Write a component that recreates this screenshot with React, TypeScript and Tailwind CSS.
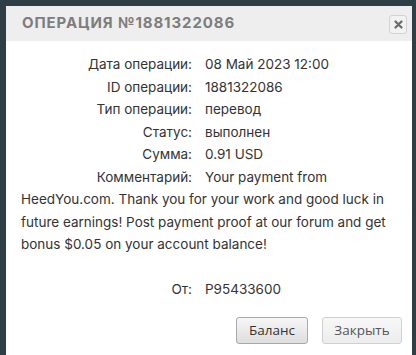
import React from "react";

const rows: [string, string][] = [
  ["Дата операции:", "08 Май 2023 12:00"],
  ["ID операции:", "1881322086"],
  ["Тип операции:", "перевод"],
  ["Статус:", "выполнен"],
  ["Сумма:", "0.91 USD"],
  ["Комментарий:", "Your payment from"],
];

export default function App() {
  return (
    <div className="w-[416px] h-[355px] bg-[#2f3d44] pt-[6px] pl-[6px] overflow-hidden">
      <div className="w-[406px] h-[349px] bg-white flex flex-col">
        <div className="h-[35px] bg-[#eeeeee] flex items-center justify-between pl-[16px] pr-[5px]">
          <div
            className="text-[15px] font-bold tracking-[0.9px] text-[#7d7d7d]"
            style={{ fontFamily: "Inter, sans-serif" }}
          >
            ОПЕРАЦИЯ №1881322086
          </div>
          <div className="w-[18px] h-[19px] mt-[1px] rounded-[3px] border border-[#d3d3d3] bg-[#f2f2f2] flex items-center justify-center">
            <svg width="9" height="9" viewBox="0 0 9 9">
              <path d="M1.5 1.5 L7.5 7.5 M7.5 1.5 L1.5 7.5" stroke="#6a6a6a" strokeWidth="2.2" strokeLinecap="round" />
            </svg>
          </div>
        </div>
        <div
          className="pl-[15px] pr-[12px] pt-[12px] text-[13.5px] leading-[22.5px] text-[#333333]"
          style={{ fontFamily: "Inter, sans-serif" }}
        >
          {rows.map(([k, v]) => (
            <div key={k} className="flex">
              <span className="w-[171px] text-right mr-[13px] shrink-0">{k}</span>
              <span>{v}</span>
            </div>
          ))}
          <p>
            HeedYou.com. Thank you for your work and good luck in future earnings! Post payment proof at our forum and get bonus $0.05 on your account balance!
          </p>
          <div className="mt-[22.5px] flex">
            <span className="w-[171px] text-right mr-[13px] shrink-0">От:</span>
            <span>P95433600</span>
          </div>
        </div>
        <div
          className="flex justify-end gap-[14px] pr-[10px] mt-[16px]"
          style={{ fontFamily: "'Open Sans', sans-serif" }}
        >
          <button className="w-[72px] h-[27px] rounded-[3px] border border-[#a9a9a9] bg-gradient-to-b from-[#f6f6f6] to-[#dedede] text-[13.5px] text-[#333]">
            Баланс
          </button>
          <button className="w-[80px] h-[27px] rounded-[3px] border border-[#d0d0d0] bg-gradient-to-b from-[#f8f8f8] to-[#ececec] text-[13.5px] text-[#555]">
            Закрыть
          </button>
        </div>
      </div>
    </div>
  );
}
